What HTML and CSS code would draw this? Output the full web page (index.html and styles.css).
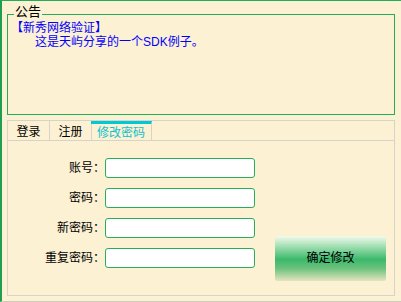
FILE: index.html
```html
<!DOCTYPE html>
<html lang="zh-CN">
<head>
	<meta charset="UTF-8">
	<title>新秀网络验证</title>
	<link rel="stylesheet" href="styles.css">
</head>
<body>
	<div class="window">
		<div class="group">
			<span class="legend">公告</span>
			<div class="notice">
				<p>【新秀网络验证】</p>
				<p>　　这是天屿分享的一个SDK例子。</p>
			</div>
		</div>
		<div class="tabs">
			<ul class="tab-head">
				<li>登录</li>
				<li>注册</li>
				<li class="current">修改密码</li>
			</ul>
			<div class="tab-body">
				<div class="fields">
					<div class="row"><label>账号：</label><input type="text"></div>
					<div class="row"><label>密码：</label><input type="password"></div>
					<div class="row"><label>新密码：</label><input type="password"></div>
					<div class="row"><label>重复密码：</label><input type="password"></div>
				</div>
				<div class="btn">确定修改</div>
			</div>
		</div>
	</div>
</body>
</html>
```

FILE: styles.css
```css
/*css reset*/
html,body,div,ul,li,p{
	padding: 0;
	margin: 0;
}
body{
	background: #fcf1d3;
	font: 12px/14px "Liberation Sans", "Noto Sans CJK SC", sans-serif;
	color: #000;
}
ul{list-style-type: none;}

/*window*/
.window{
	width: 401px;
	height: 302px;
	box-sizing: border-box;
	border-top: 1px solid #22ad5a;
	border-left: 2px solid #1f9e52;
	border-bottom: 1px solid #cfcbc2;
	padding: 13px 6px 5px 5px;
}

/*公告*/
.group{
	height: 101px;
	box-sizing: border-box;
	border: 1px solid #22ad5a;
	position: relative;
}
.legend{
	position: absolute;
	top: -11px;
	left: 6px;
	padding: 0 1px;
	background: #fcf1d3;
	font-size: 13px;
	line-height: 15px;
}
.notice{
	padding: 6px 0 0 3px;
	color: #0000ff;
}
.notice p{
	height: 14px;
	white-space: nowrap;
}

/*tabs*/
.tabs{margin-top: 5px;}
.tab-head{
	display: flex;
	height: 21px;
	box-sizing: border-box;
	border: 1px solid #d6d3cb;
}
.tab-head li{
	width: 42px;
	box-sizing: border-box;
	padding-top: 3px;
	line-height: 16px;
	text-align: center;
	white-space: nowrap;
	border-right: 1px solid #d6d3cb;
	cursor: pointer;
}
.tab-head li.current{
	width: 61px;
	margin-left: -1px;
	border-top: 3px solid #00c8d6;
	padding-top: 1px;
	color: #12bfd0;
}
.tab-body{
	height: 155px;
	box-sizing: border-box;
	border: 1px solid #d6d3cb;
	border-top: none;
	padding-top: 17px;
	display: flex;
}
.fields{
	display: flex;
	flex-direction: column;
	gap: 10px;
}
.row{
	display: flex;
	align-items: center;
	height: 20px;
}
.row label{
	width: 97px;
	text-align: right;
}
.row input{
	width: 150px;
	height: 20px;
	box-sizing: border-box;
	margin: 0;
	border: 1px solid #27ad5c;
	border-radius: 3px;
	background: #fff;
	outline: none;
}
.btn{
	width: 111px;
	height: 45px;
	margin: 78px 0 0 20px;
	border-radius: 2px;
	background: linear-gradient(#f4faec 0%, #a6e0b6 22%, #3bb96b 52%, #6cc27c 72%, #e4e4c0 100%);
	text-align: center;
	line-height: 45px;
	cursor: pointer;
}
```
